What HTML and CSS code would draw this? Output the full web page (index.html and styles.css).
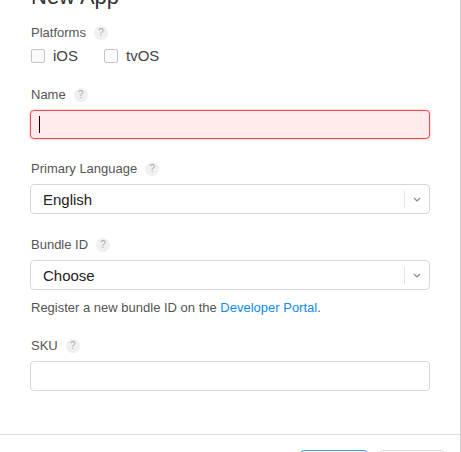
FILE: index.html
```html
<!DOCTYPE html>
<html>
<head>
<meta charset="utf-8">
<link rel="stylesheet" href="styles.css">
</head>
<body>
<div class="modal">
  <h1 class="title">New App</h1>
  <div class="form">
    <div class="group group-platforms">
      <div class="label">Platforms <span class="help">?</span></div>
      <div class="checks">
        <label class="check"><span class="box"></span>iOS</label>
        <label class="check"><span class="box"></span>tvOS</label>
      </div>
    </div>
    <div class="group">
      <div class="label">Name <span class="help">?</span></div>
      <div class="field field-error"><span class="caret"></span></div>
    </div>
    <div class="group group-lang">
      <div class="label">Primary Language <span class="help">?</span></div>
      <div class="field select">
        <span class="value">English</span>
        <span class="divider"></span>
        <svg class="chev" width="8" height="5" viewBox="0 0 8 5"><path d="M1 1 L4 4 L7 1" fill="none" stroke="#888" stroke-width="1.2"/></svg>
      </div>
    </div>
    <div class="group">
      <div class="label">Bundle ID <span class="help">?</span></div>
      <div class="field select">
        <span class="value">Choose</span>
        <span class="divider"></span>
        <svg class="chev" width="8" height="5" viewBox="0 0 8 5"><path d="M1 1 L4 4 L7 1" fill="none" stroke="#888" stroke-width="1.2"/></svg>
      </div>
      <p class="hint">Register a new bundle ID on the <a href="#" class="link">Developer Portal</a>.</p>
    </div>
    <div class="group group-last">
      <div class="label">SKU <span class="help">?</span></div>
      <div class="field"></div>
    </div>
  </div>
  <div class="footer">
    <button class="btn btn-primary">Create</button>
    <button class="btn">Cancel</button>
  </div>
</div>
</body>
</html>
```

FILE: styles.css
```css
html, body {
  margin: 0;
  padding: 0;
  background: #fff;
}
body {
  font-family: "Liberation Sans", Arial, sans-serif;
  color: #333;
  overflow: hidden;
}
.modal {
  width: 461px;
  height: 452px;
  box-sizing: border-box;
  border-right: 1px solid #d0d0d0;
  overflow: hidden;
}
.title {
  margin: -14px 0 0 31px;
  font-size: 22px;
  line-height: 22px;
  font-weight: normal;
  color: #333;
  height: 22px;
}
.form {
  padding: 17px 30px 0 30px;
}
.group {
  margin-bottom: 22px;
}
.group-platforms {
  margin-bottom: 22px;
}
.group-lang {
  margin-bottom: 23px;
}
.group-last {
  margin-bottom: 0;
}
.label {
  font-size: 13px;
  line-height: 16px;
  color: #555;
  padding-left: 1px;
  margin-bottom: 7px;
  display: flex;
  align-items: center;
}
.group-platforms .label {
  margin-bottom: 6px;
}
.help {
  display: inline-flex;
  align-items: center;
  justify-content: center;
  width: 14px;
  height: 14px;
  margin-left: 8px;
  border-radius: 50%;
  background: #f0f0f2;
  color: #a8a8a8;
  font-size: 10px;
  line-height: 14px;
}
.checks {
  display: flex;
  height: 18px;
  align-items: center;
  padding-left: 1px;
}
.check {
  display: flex;
  align-items: center;
  font-size: 15px;
  line-height: 18px;
  color: #444;
  margin-right: 26px;
}
.box {
  width: 12px;
  height: 12px;
  border: 1px solid #c4c4c4;
  border-radius: 2px;
  background: #fbfbfb;
  margin-right: 8px;
}
.field {
  height: 30px;
  box-sizing: border-box;
  border: 1px solid #d6d6d6;
  border-radius: 4px;
  background: #fff;
  display: flex;
  align-items: center;
}
.field-error {
  height: 29px;
  border-color: #f24c4c;
  background: #ffebeb;
  box-shadow: 0 0 1px 1px rgba(255, 110, 110, 0.25);
  padding-left: 8px;
}
.caret {
  width: 1px;
  height: 17px;
  background: #000;
}
.select {
  padding-left: 12px;
}
.value {
  flex: 1;
  font-size: 15px;
  color: #222;
}
.divider {
  width: 1px;
  height: 17px;
  background: #e2e2e2;
  margin-right: 8px;
}
.chev {
  margin-right: 8px;
}
.hint {
  margin: 10px 0 0 1px;
  font-size: 13px;
  line-height: 16px;
  color: #555;
}
.link {
  color: #0f8cf0;
  text-decoration: none;
}
.footer {
  margin-top: 43px;
  border-top: 1px solid #dcdcdc;
  padding: 15px 15px 0 0;
  display: flex;
  justify-content: flex-end;
  gap: 11px;
}
.btn {
  height: 30px;
  box-sizing: border-box;
  border: 1px solid #dcdcdc;
  border-radius: 4px;
  background: #fff;
  font-family: "Liberation Sans", Arial, sans-serif;
  font-size: 13px;
  color: #333;
  width: 66px;
}
.btn-primary {
  border: 1px solid #3a9af5;
  width: 68px;
  color: #0f8cf0;
}
```
